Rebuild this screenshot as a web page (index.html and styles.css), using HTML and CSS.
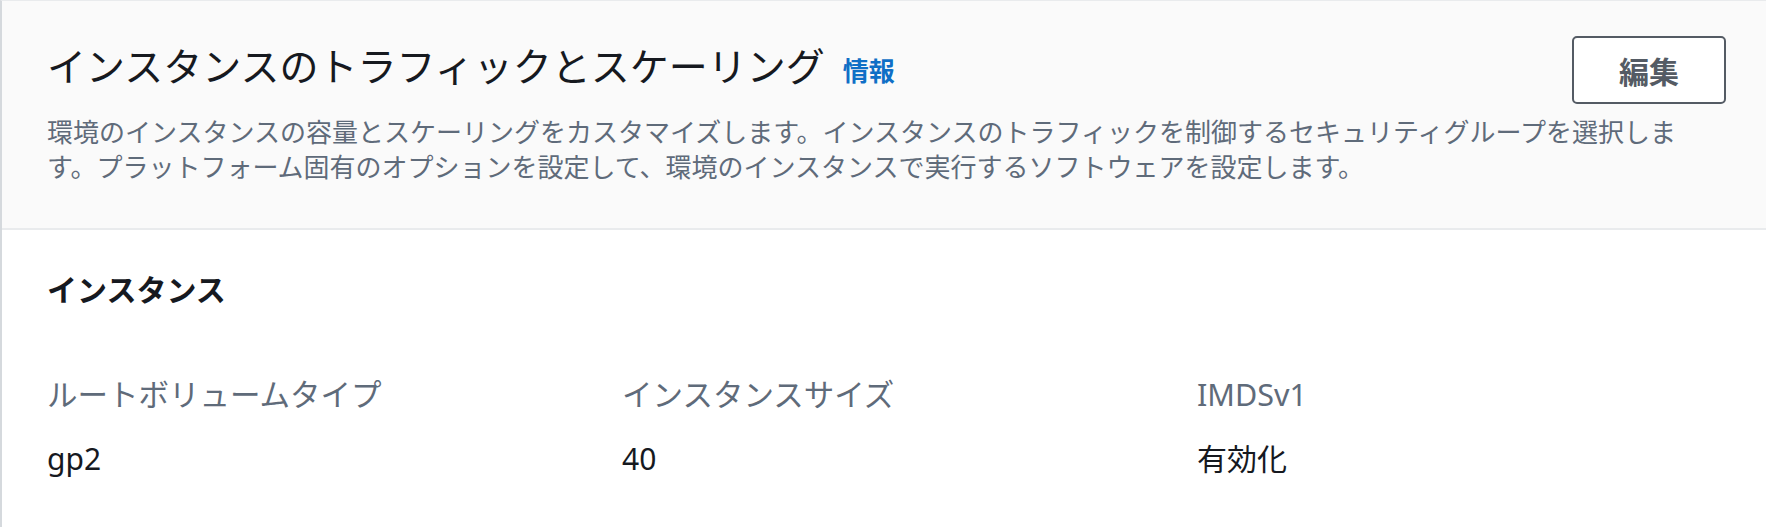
FILE: index.html
```html
<!DOCTYPE html>
<html lang="ja">
<head>
<meta charset="utf-8">
<link rel="stylesheet" href="styles.css">
</head>
<body>
<div class="container">
  <div class="header">
    <div class="header-top">
      <div class="title-wrap">
        <h2 class="title">インスタンスのトラフィックとスケーリング</h2>
        <a class="info">情報</a>
      </div>
      <button class="btn">編集</button>
    </div>
    <p class="desc">環境のインスタンスの容量とスケーリングをカスタマイズします。インスタンスのトラフィックを制御するセキュリティグループを選択します。プラットフォーム固有のオプションを設定して、環境のインスタンスで実行するソフトウェアを設定します。</p>
  </div>
  <div class="body">
    <h3 class="section">インスタンス</h3>
    <div class="kv">
      <div class="item">
        <div class="label">ルートボリュームタイプ</div>
        <div class="value">gp2</div>
      </div>
      <div class="item">
        <div class="label">インスタンスサイズ</div>
        <div class="value">40</div>
      </div>
      <div class="item">
        <div class="label">IMDSv1</div>
        <div class="value">有効化</div>
      </div>
    </div>
  </div>
</div>
</body>
</html>
```

FILE: styles.css
```css
html, body {
  margin: 0;
  padding: 0;
  background: #ffffff;
}
body {
  font-family: "Noto Sans", "Noto Sans CJK JP", sans-serif;
  color: #16191f;
  width: 1766px;
  height: 528px;
  overflow: hidden;
}
.container {
  border-top: 1px solid #e9ebed;
  border-left: 2px solid #d5d9dd;
  height: 527px;
  box-sizing: border-box;
}
.header {
  background: #fafafa;
  border-bottom: 2px solid #e9ebed;
  padding: 35px 40px 0 45px;
  height: 229px;
  box-sizing: border-box;
}
.header-top {
  display: flex;
  justify-content: space-between;
  align-items: flex-start;
}
.title-wrap {
  display: flex;
  align-items: baseline;
  gap: 18px;
  margin-top: 4px;
}
.title {
  margin: 0;
  font-size: 39px;
  line-height: 49px;
  font-weight: 400;
  color: #16191f;
  font-family: "Noto Sans CJK JP", sans-serif;
}
.info {
  font-size: 26px;
  font-weight: 700;
  color: #0f6fc6;
  font-family: "Noto Sans CJK JP", sans-serif;
}
.btn {
  width: 154px;
  height: 68px;
  box-sizing: border-box;
  border: 2px solid #545b64;
  border-radius: 5px;
  background: #ffffff;
  color: #545b64;
  font-size: 30px;
  font-weight: 700;
  font-family: "Noto Sans CJK JP", sans-serif;
  padding: 0;
  line-height: 1;
}
.desc {
  margin: 9px 20px 0 0;
  font-size: 26px;
  line-height: 35px;
  color: #5f6b7a;
  font-family: "Noto Sans CJK JP", sans-serif;
}
.body {
  padding: 38px 40px 0 45px;
}
.section {
  margin: 0;
  font-size: 30px;
  line-height: 40px;
  font-weight: 700;
  color: #16191f;
  font-family: "Noto Sans CJK JP", sans-serif;
}
.kv {
  display: grid;
  grid-template-columns: repeat(3, 1fr);
  column-gap: 46px;
  margin-top: 66px;
}
.label {
  font-size: 30.5px;
  line-height: 40px;
  color: #5f6b7a;
}
.value {
  font-size: 30px;
  line-height: 40px;
  color: #16191f;
  margin-top: 25px;
}
```
